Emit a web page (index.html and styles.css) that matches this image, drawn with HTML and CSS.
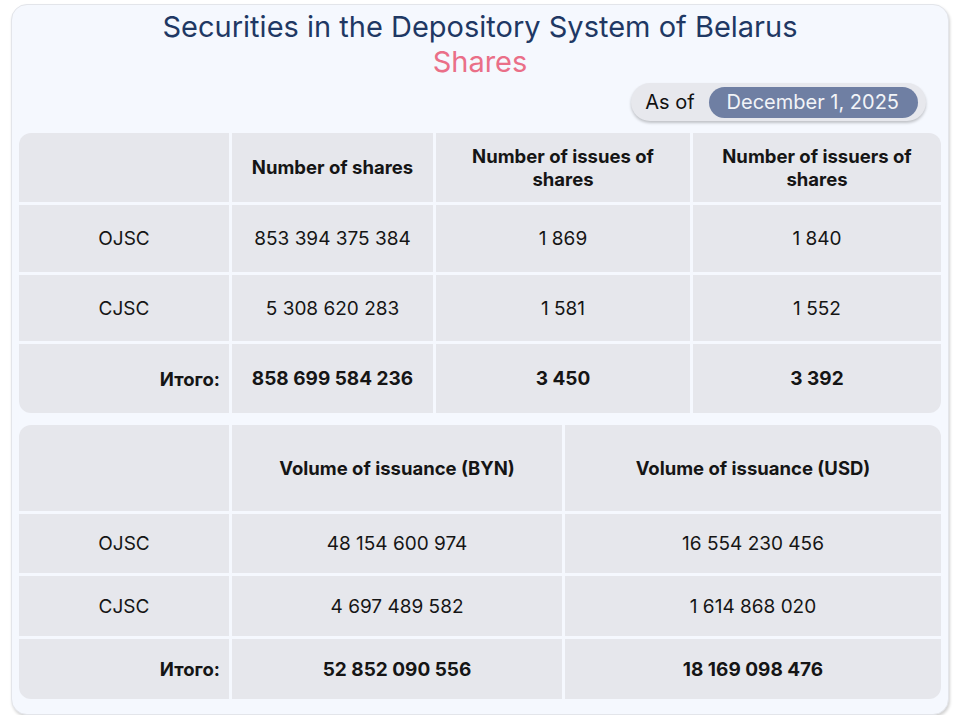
FILE: index.html
```html
<!DOCTYPE html>
<html lang="en">
<head>
<meta charset="utf-8">
<title>Securities in the Depository System of Belarus</title>
<link rel="stylesheet" href="styles.css">
</head>
<body>
<div class="card">
  <header class="head">
    <h1 class="title">Securities in the Depository System of Belarus</h1>
    <div class="subtitle">Shares</div>
  </header>
  <div class="date-row">
    <div class="date-pill">
      <span class="as-of">As of</span>
      <span class="date">December 1, 2025</span>
    </div>
  </div>
  <div class="grid grid-a">
    <div class="cell corner-tl"></div>
    <div class="cell th">Number of shares</div>
    <div class="cell th">Number of issues of<br>shares</div>
    <div class="cell th corner-tr">Number of issuers of<br>shares</div>

    <div class="cell label">OJSC</div>
    <div class="cell">853 394 375 384</div>
    <div class="cell">1 869</div>
    <div class="cell">1 840</div>

    <div class="cell label">CJSC</div>
    <div class="cell">5 308 620 283</div>
    <div class="cell">1 581</div>
    <div class="cell">1 552</div>

    <div class="cell total-label corner-bl">Итого:</div>
    <div class="cell total">858 699 584 236</div>
    <div class="cell total">3 450</div>
    <div class="cell total corner-br">3 392</div>
  </div>
  <div class="grid grid-b">
    <div class="cell corner-tl"></div>
    <div class="cell th">Volume of issuance (BYN)</div>
    <div class="cell th corner-tr">Volume of issuance (USD)</div>

    <div class="cell label">OJSC</div>
    <div class="cell">48 154 600 974</div>
    <div class="cell">16 554 230 456</div>

    <div class="cell label">CJSC</div>
    <div class="cell">4 697 489 582</div>
    <div class="cell">1 614 868 020</div>

    <div class="cell total-label corner-bl">Итого:</div>
    <div class="cell total">52 852 090 556</div>
    <div class="cell total corner-br">18 169 098 476</div>
  </div>
</div>
</body>
</html>
```

FILE: styles.css
```css
* { box-sizing: border-box; }

html, body {
  margin: 0;
  padding: 0;
  background: #ffffff;
}

body {
  font-family: Inter, Roboto, "Liberation Sans", sans-serif;
  color: #111111;
  padding: 4px 11px 0 11px;
}

.card {
  width: 938px;
  height: 711px;
  background: #f5f8fe;
  border: 1px solid #e3e5ea;
  border-radius: 16px;
  box-shadow: 1px 2px 3px rgba(0, 0, 0, 0.18);
  padding: 4px 7px 0 7px;
}

.head {
  text-align: center;
}

.title {
  margin: 0;
  font-size: 29px;
  font-weight: 400;
  line-height: 35px;
  color: #1f3864;
}

.subtitle {
  font-size: 29px;
  line-height: 35px;
  color: #ea6f88;
}

.date-row {
  display: flex;
  justify-content: flex-end;
  padding-right: 15px;
  margin-top: 4px;
}

.date-pill {
  display: flex;
  align-items: center;
  gap: 14px;
  height: 38px;
  padding: 3px 8px 3px 14px;
  background: #e7e8ed;
  border-radius: 19px;
  box-shadow: 0 2px 3px rgba(0, 0, 0, 0.22);
}

.as-of {
  font-size: 20px;
  color: #111111;
}

.date {
  display: flex;
  align-items: center;
  height: 31px;
  padding: 0 19px 0 18px;
  border-radius: 16px;
  background: #6f7fa3;
  color: #f2f4f8;
  font-size: 20px;
}

.grid {
  display: grid;
  gap: 3px;
  margin-top: 12px;
}

.grid-a {
  grid-template-columns: 210px 201px 254px 248px;
  grid-template-rows: 69px 67px 66px 69px;
}

.grid-b {
  grid-template-columns: 210px 330px 376px;
  grid-template-rows: 86px 59px 60px 60px;
}

.cell {
  background: #e6e7ec;
  display: flex;
  align-items: center;
  justify-content: center;
  text-align: center;
  font-size: 19px;
  color: #151515;
}

.th {
  font-size: 18.5px;
  font-weight: 700;
  line-height: 23px;
}

.label {
  font-size: 19px;
}

.total-label {
  justify-content: flex-end;
  padding-right: 9px;
  font-weight: 700;
  font-size: 18.5px;
}

.total {
  font-weight: 700;
}

.corner-tl { border-top-left-radius: 12px; }
.corner-tr { border-top-right-radius: 12px; }
.corner-bl { border-bottom-left-radius: 12px; }
.corner-br { border-bottom-right-radius: 12px; }
```
